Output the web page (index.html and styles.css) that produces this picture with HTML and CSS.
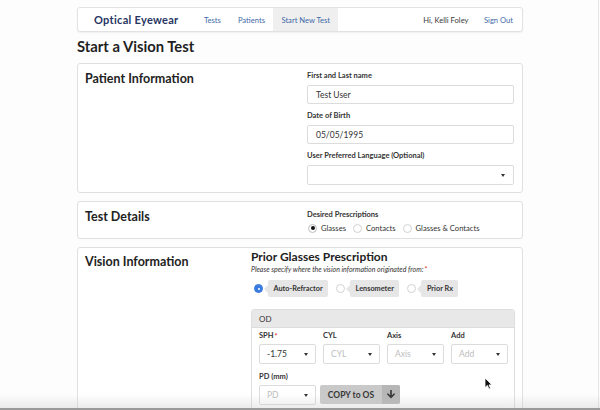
FILE: index.html
```html
<!DOCTYPE html>
<html>
<head>
<meta charset="utf-8">
<link rel="stylesheet" href="styles.css">
</head>
<body>
<div class="page">
  <nav class="nav">
    <div class="brand">Optical Eyewear</div>
    <a class="nav-link">Tests</a>
    <a class="nav-link">Patients</a>
    <a class="nav-link active">Start New Test</a>
    <div class="nav-spacer"></div>
    <span class="nav-user">Hi, Kelli Foley</span>
    <a class="nav-link signout">Sign Out</a>
  </nav>

  <h1 class="title">Start a Vision Test</h1>

  <section class="panel panel-patient">
    <h2 class="panel-title">Patient Information</h2>
    <div class="fields">
      <div class="field">
        <label class="lbl">First and Last name</label>
        <div class="input">Test User</div>
      </div>
      <div class="field">
        <label class="lbl">Date of Birth</label>
        <div class="input">05/05/1995</div>
      </div>
      <div class="field">
        <label class="lbl">User Preferred Language (Optional)</label>
        <div class="input select"><span></span><i class="caret"></i></div>
      </div>
    </div>
  </section>

  <section class="panel panel-test">
    <h2 class="panel-title">Test Details</h2>
    <div class="fields">
      <label class="lbl">Desired Prescriptions</label>
      <div class="radios">
        <span class="radio checked-dark"></span><span class="rtext">Glasses</span>
        <span class="radio"></span><span class="rtext">Contacts</span>
        <span class="radio"></span><span class="rtext">Glasses &amp; Contacts</span>
      </div>
    </div>
  </section>

  <section class="panel panel-vision">
    <h2 class="panel-title">Vision Information</h2>
    <div class="vision">
      <h3 class="sub">Prior Glasses Prescription</h3>
      <p class="hint">Please specify where the vision information originated from:<span class="req">*</span></p>
      <div class="sources">
        <span class="radio checked-blue"></span><span class="tag">Auto-Refractor</span>
        <span class="radio"></span><span class="tag">Lensometer</span>
        <span class="radio"></span><span class="tag">Prior Rx</span>
      </div>
      <div class="card">
        <div class="card-head">OD</div>
        <div class="card-body">
          <div class="grid4">
            <div class="cell">
              <label class="lbl">SPH<span class="req">*</span></label>
              <div class="input select sm"><span class="val">-1.75</span><i class="caret"></i></div>
            </div>
            <div class="cell">
              <label class="lbl">CYL</label>
              <div class="input select sm"><span class="ph">CYL</span><i class="caret"></i></div>
            </div>
            <div class="cell">
              <label class="lbl">Axis</label>
              <div class="input select sm"><span class="ph">Axis</span><i class="caret"></i></div>
            </div>
            <div class="cell">
              <label class="lbl">Add</label>
              <div class="input select sm"><span class="ph">Add</span><i class="caret"></i></div>
            </div>
          </div>
          <label class="lbl pd-lbl">PD (mm)</label>
          <div class="pd-row">
            <div class="input select sm"><span class="ph">PD</span><i class="caret"></i></div>
            <div class="copy-btn">
              <span class="copy-text">COPY to OS</span>
              <span class="copy-arrow"><svg width="8" height="9" viewBox="0 0 8 9"><path d="M4 0.5 V7 M1 4.2 L4 7.5 L7 4.2" stroke="#333" stroke-width="1.6" fill="none" stroke-linecap="round" stroke-linejoin="round"/></svg></span>
            </div>
          </div>
        </div>
      </div>
    </div>
  </section>
</div>

<svg class="cursor" width="9" height="13" viewBox="0 0 9 13"><path d="M1 1 L1 10.5 L3.4 8.4 L5 12 L6.5 11.3 L5 7.9 L8 7.9 Z" fill="#111" stroke="#fff" stroke-width="0.8"/></svg>
<div class="frame-right"></div>
<div class="frame-bottom"></div>
</body>
</html>
```
FILE: styles.css
```css
* { box-sizing: border-box; }
html, body { margin: 0; padding: 0; }
body {
  background: #fdfdfd;
  font-family: Lato, "Liberation Sans", sans-serif;
  color: #2a2a2a;
  width: 600px;
  height: 410px;
  overflow: hidden;
  position: relative;
}
.page {
  width: 446px;
  margin-left: 77px;
  padding-top: 7px;
}
.nav {
  display: flex;
  align-items: stretch;
  height: 25px;
  border: 1px solid #e2e2e2;
  border-radius: 3px;
  box-shadow: 0 1px 2px rgba(0,0,0,0.06);
  background: #fff;
  font-size: 7.6px;
}
.brand {
  display: flex;
  align-items: center;
  padding-left: 16px;
  padding-right: 17px;
  font-size: 11px;
  font-weight: 700;
  color: #263561;
  letter-spacing: 0.3px;
}
.nav-link {
  display: flex;
  align-items: center;
  padding: 0 8.5px;
  color: #3f6aa8;
}
.nav-link.active { background: #efefef; padding: 0 8px; }
.nav-spacer { flex: 1; }
.nav-user {
  display: flex;
  align-items: center;
  color: #3a3a3a;
  padding-right: 7px;
}
.signout { padding-right: 9px; }
.title {
  margin: 5px 0 0;
  font-size: 14.8px;
  line-height: 19px;
  font-weight: 700;
  color: #1f1f1f;
}
.panel {
  border: 1px solid #e0e0e0;
  border-radius: 3px;
  background: #fff;
  margin-top: 7px;
  display: grid;
  grid-template-columns: 222px 1fr;
  padding: 7px 8px 7px 7px;
}
.panel + .panel { margin-top: 8px; }
.panel-title {
  margin: 0;
  font-size: 12.5px;
  font-weight: 700;
  color: #222;
  line-height: 16px;
}
.fields { display: flex; flex-direction: column; }
.field { display: flex; flex-direction: column; }
.field + .field { margin-top: 7px; }
.lbl {
  display: block;
  font-size: 7.5px;
  font-weight: 700;
  color: #333;
  line-height: 10px;
  margin-bottom: 4px;
}
.input {
  height: 19px;
  border: 1px solid #dcdcdc;
  border-radius: 2px;
  background: #fff;
  font-size: 8.5px;
  color: #333;
  padding: 0 8px;
  display: flex;
  align-items: center;
}
.select { justify-content: space-between; }
.select .caret {
  width: 0; height: 0;
  border-left: 2.5px solid transparent;
  border-right: 2.5px solid transparent;
  border-top: 3px solid #333;
}
.panel-patient .select { height: 20px; }
.panel-test { padding-top: 7px; padding-bottom: 5px; }
.panel-test .lbl { margin-top: 1px; margin-bottom: 3px; }
.radios, .sources {
  display: flex;
  align-items: center;
  color: #333;
  white-space: nowrap;
}
.radios { font-size: 7.6px; }
.radio {
  width: 9px; height: 9px;
  border-radius: 50%;
  border: 1px solid #d2d2d2;
  background: #fff;
  flex: none;
  position: relative;
}
.radios .radio { margin-left: 1px; }
.radios .rtext { margin-left: 4px; margin-right: 6px; }
.checked-dark { border-color: #bdbdbd; }
.checked-dark::after {
  content: "";
  position: absolute;
  left: 1.5px; top: 1.5px;
  width: 4px; height: 4px;
  border-radius: 50%;
  background: #111;
}
.checked-blue { background: #3a7be0; border-color: #3a7be0; }
.checked-blue::after {
  content: "";
  position: absolute;
  left: 2.5px; top: 2.5px;
  width: 2px; height: 2px;
  border-radius: 50%;
  background: #fff;
}
.panel-vision {
  grid-template-columns: 166px 1fr;
  padding-top: 6px;
  padding-right: 7px;
  padding-bottom: 20px;
}
.sub {
  margin: -4px 0 0;
  font-size: 12px;
  line-height: 14px;
  font-weight: 700;
  color: #222;
}
.hint {
  margin: 0;
  font-size: 7px;
  font-style: italic;
  color: #333;
  line-height: 10px;
}
.req { color: #d93025; font-style: normal; font-size: 7px; vertical-align: top; margin-left: 1px; }
.sources { margin-top: 6px; font-size: 7.3px; }
.sources .radio { margin-left: 3px; }
.tag {
  position: relative;
  background: #e6e6e6;
  border-radius: 2px;
  height: 17px;
  display: flex;
  align-items: center;
  padding: 0 5.5px;
  margin-left: 5px;
  margin-right: 5px;
  font-weight: 700;
  color: #333;
}
.tag::before {
  content: "";
  position: absolute;
  left: -4px; top: 4.5px;
  border-top: 4px solid transparent;
  border-bottom: 4px solid transparent;
  border-right: 4px solid #e6e6e6;
}
.card {
  margin-top: 12px;
  width: 264px;
  border: 1px solid #dedede;
  border-radius: 3px;
  overflow: hidden;
}
.card-head {
  height: 18px;
  background: #e8e8e8;
  border-bottom: 1px solid #dcdcdc;
  font-size: 8px;
  color: #333;
  padding-left: 7px;
  display: flex;
  align-items: center;
}
.card-body { padding: 3px 7px 6px; }
.card-body .lbl { margin-bottom: 3px; }
.grid4 {
  display: grid;
  grid-template-columns: repeat(4, 57px);
  column-gap: 7px;
}
.sm { height: 20px; padding: 0 7px; }
.val { color: #333; }
.ph { color: #bdbdbd; }
.card-body .pd-lbl { margin-top: 8px; margin-bottom: 3px; }
.pd-row { display: flex; gap: 4px; }
.pd-row .input { width: 57px; }
.copy-btn {
  display: flex;
  height: 19px;
  border-radius: 2px;
  overflow: hidden;
  background: #c9c9c9;
  font-size: 8.5px;
  font-weight: 700;
  color: #333;
}
.copy-text { width: 62px; display: flex; align-items: center; justify-content: center; }
.copy-arrow { width: 18px; background: #b6b6b6; display: flex; align-items: center; justify-content: center; }
.cursor { position: absolute; left: 484px; top: 377px; }
.frame-right {
  position: absolute; top: 0; right: 1px; width: 1px; height: 410px; background: #e6e6e6;
}
.frame-bottom {
  position: absolute; left: 0; bottom: 0; width: 600px; height: 16px;
  background: linear-gradient(to bottom, rgba(230,230,230,0), rgba(200,200,200,0.35));
  border-bottom: 2px solid #9a9a9a;
}
```
